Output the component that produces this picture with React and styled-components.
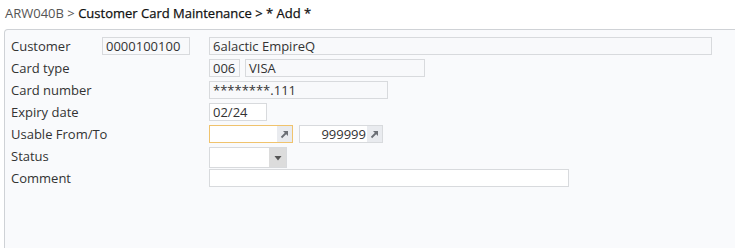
import React from "react";
import styled, { createGlobalStyle } from "styled-components";

const Global = createGlobalStyle`
  html, body { margin: 0; padding: 0; background: #ffffff; overflow: hidden; }
  body { font-family: "Open Sans", "Liberation Sans", sans-serif; font-size: 13px; color: #333; }
`;

const Page = styled.div`
  display: flex;
  flex-direction: column;
  width: 735px;
  height: 248px;
`;

const Title = styled.div`
  padding: 5px 0 0 5px;
  height: 24px;
  box-sizing: border-box;
  line-height: 17px;
  font-size: 13px;
  color: #555;
  white-space: nowrap;
`;

const Crumb = styled.span`
  color: #111;
  -webkit-text-stroke: 0.25px #111;
`;

const Panel = styled.div`
  margin-top: 5px;
  margin-left: 4px;
  margin-right: -10px;
  flex: 1;
  background: #f9fafc;
  border: 1px solid #cfd2d6;
  border-bottom: none;
  border-radius: 4px 4px 0 0;
  padding: 7px 0 0 6px;
  display: grid;
  grid-template-columns: 91px 107px 1fr;
  grid-auto-rows: 18px;
  row-gap: 4px;
  align-content: start;
`;

const Label = styled.div`
  grid-column: ${(p) => (p.$short ? "1 / 2" : "1 / 3")};
  line-height: 18px;
  color: #333;
  white-space: nowrap;
`;

const Fields = styled.div`
  grid-column: ${(p) => p.$col || "3 / 4"};
  display: flex;
  gap: ${(p) => p.$gap || 5}px;
  align-items: flex-start;
`;

const Box = styled.div`
  box-sizing: border-box;
  width: ${(p) => p.$w}px;
  height: ${(p) => p.$h || 18}px;
  border: 1px solid ${(p) => (p.$focus ? "#f0c36d" : "#d8dadd")};
  background: ${(p) => (p.$white ? "#ffffff" : "#f8f9fb")};
  padding: 0 3px;
  line-height: 16px;
  color: #333;
  white-space: nowrap;
  overflow: hidden;
  display: flex;
  align-items: stretch;
`;

const BoxText = styled.span`
  flex: 1;
  text-align: ${(p) => (p.$right ? "right" : "left")};
  padding-right: ${(p) => (p.$right ? 1 : 0)}px;
`;

const PickBtn = styled.span`
  width: 15px;
  margin-right: -3px;
  background: #e9ebef;
  display: flex;
  align-items: center;
  justify-content: center;
`;

const DropBtn = styled.span`
  width: 17px;
  margin-right: -3px;
  background: #dcdcdc;
  display: flex;
  align-items: center;
  justify-content: center;
`;

const PickIcon = () => (
  <svg width="9" height="9" viewBox="0 0 9 9">
    <path d="M1.5 7.5 L6.5 2.5" stroke="#6b6f75" strokeWidth="1.8" />
    <path d="M3 1 H8 V6 Z" fill="#6b6f75" />
  </svg>
);

const DropIcon = () => (
  <svg width="8" height="6" viewBox="0 0 8 6">
    <path d="M0.5 1 H7.5 L4 5.5 Z" fill="#555" />
  </svg>
);

const Row = ({ label, children, gap }) => (
  <>
    <Label>{label}</Label>
    <Fields $gap={gap}>{children}</Fields>
  </>
);

export default function App() {
  return (
    <Page>
      <Global />
      <Title>
        ARW040B &gt; <Crumb>Customer Card Maintenance &gt; * Add *</Crumb>
      </Title>
      <Panel>
        <Label $short>Customer</Label>
        <Fields $col="2 / 3">
          <Box $w={88}><BoxText>0000100100</BoxText></Box>
        </Fields>
        <Fields>
          <Box $w={503}><BoxText>6alactic EmpireQ</BoxText></Box>
        </Fields>

        <Row label="Card type">
          <Box $w={31}><BoxText>006</BoxText></Box>
          <Box $w={180}><BoxText>VISA</BoxText></Box>
        </Row>

        <Row label="Card number">
          <Box $w={179}><BoxText>********.111</BoxText></Box>
        </Row>

        <Row label="Expiry date">
          <Box $w={58} $white><BoxText>02/24</BoxText></Box>
        </Row>

        <Row label="Usable From/To" gap={6}>
          <Box $w={84} $white $focus>
            <BoxText />
            <PickBtn><PickIcon /></PickBtn>
          </Box>
          <Box $w={84} $white>
            <BoxText $right>999999</BoxText>
            <PickBtn><PickIcon /></PickBtn>
          </Box>
        </Row>

        <Row label="Status">
          <Box $w={78} $h={21} $white>
            <BoxText />
            <DropBtn><DropIcon /></DropBtn>
          </Box>
        </Row>

        <Row label="Comment">
          <Box $w={360} $white><BoxText /></Box>
        </Row>
      </Panel>
    </Page>
  );
}
